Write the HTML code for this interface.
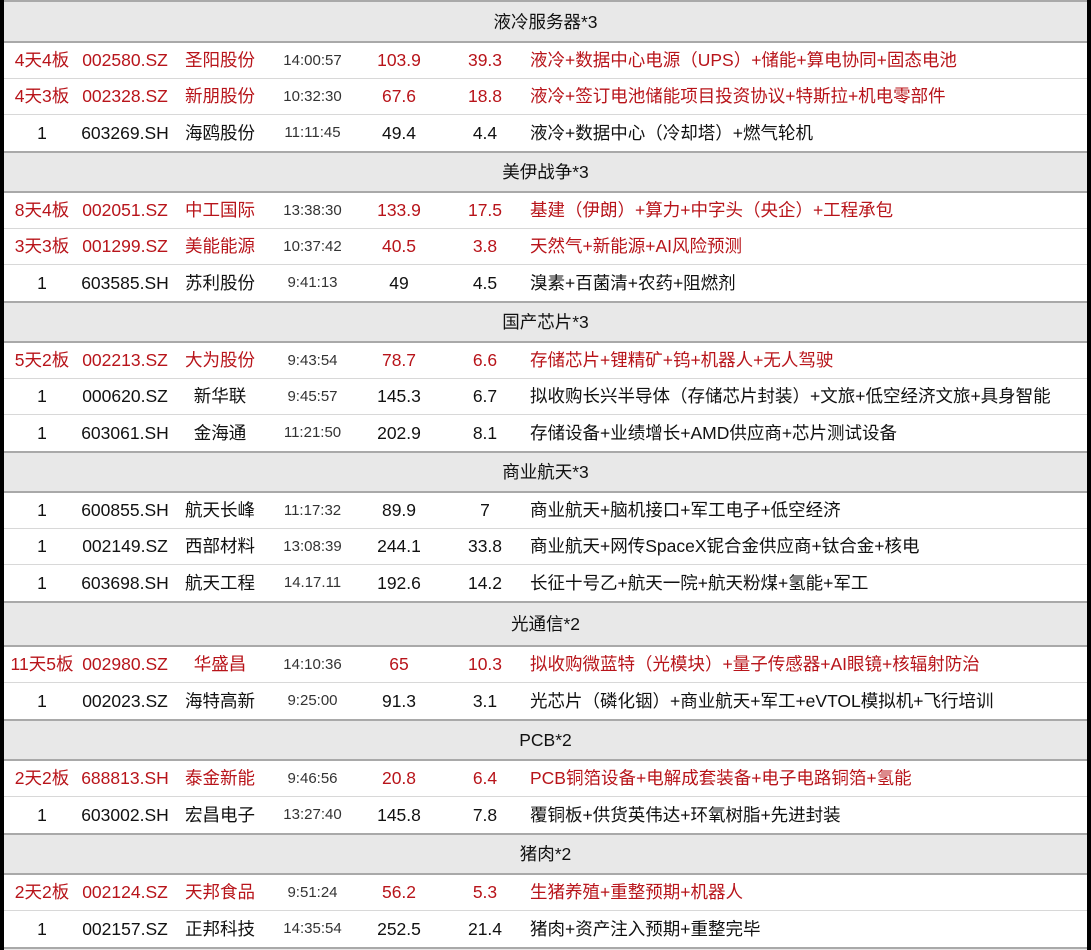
<!DOCTYPE html>
<html><head><meta charset="utf-8"><style>
body{margin:0;width:1091px;height:950px;background:#000;overflow:hidden;font-family:"Liberation Sans","Noto Sans CJK SC",sans-serif;}
.wrap{position:absolute;left:4px;top:0;width:1083px;height:950px;background:#e8e8e8;border-top:2px solid #a9a9a9;box-sizing:border-box;padding-top:1px;}
.h{height:38px;line-height:38px;text-align:center;font-size:17.5px;color:#111;background:#e8e8e8;border-bottom:2px solid #a9a9a9;}
.h.t{height:42px;line-height:42px;}
.r{height:35px;line-height:35px;background:#fff;border-bottom:1px solid #d8d8d8;position:relative;font-size:17.5px;color:#111;white-space:nowrap;}
.r.l{height:36px;line-height:36px;border-bottom:2px solid #a9a9a9;}
.r span{position:absolute;top:0;text-align:center;}
.c1{left:0;width:76px}.c2{left:76px;width:90px}.c3{left:166px;width:100px}
.c4{left:266px;width:85px;font-size:15px;color:#333}.c5{left:351px;width:88px}.c6{left:439px;width:84px}
.r span.c7{left:526px;text-align:left}
.red{color:#b8141a}.red .c4{color:#333}
</style></head><body><div class="wrap">
<div class="h">液冷服务器*3</div>
<div class="r red"><span class="c1">4天4板</span><span class="c2">002580.SZ</span><span class="c3">圣阳股份</span><span class="c4">14:00:57</span><span class="c5">103.9</span><span class="c6">39.3</span><span class="c7">液冷+数据中心电源（UPS）+储能+算电协同+固态电池</span></div>
<div class="r red"><span class="c1">4天3板</span><span class="c2">002328.SZ</span><span class="c3">新朋股份</span><span class="c4">10:32:30</span><span class="c5">67.6</span><span class="c6">18.8</span><span class="c7">液冷+签订电池储能项目投资协议+特斯拉+机电零部件</span></div>
<div class="r l"><span class="c1">1</span><span class="c2">603269.SH</span><span class="c3">海鸥股份</span><span class="c4">11:11:45</span><span class="c5">49.4</span><span class="c6">4.4</span><span class="c7">液冷+数据中心（冷却塔）+燃气轮机</span></div>
<div class="h">美伊战争*3</div>
<div class="r red"><span class="c1">8天4板</span><span class="c2">002051.SZ</span><span class="c3">中工国际</span><span class="c4">13:38:30</span><span class="c5">133.9</span><span class="c6">17.5</span><span class="c7">基建（伊朗）+算力+中字头（央企）+工程承包</span></div>
<div class="r red"><span class="c1">3天3板</span><span class="c2">001299.SZ</span><span class="c3">美能能源</span><span class="c4">10:37:42</span><span class="c5">40.5</span><span class="c6">3.8</span><span class="c7">天然气+新能源+AI风险预测</span></div>
<div class="r l"><span class="c1">1</span><span class="c2">603585.SH</span><span class="c3">苏利股份</span><span class="c4">9:41:13</span><span class="c5">49</span><span class="c6">4.5</span><span class="c7">溴素+百菌清+农药+阻燃剂</span></div>
<div class="h">国产芯片*3</div>
<div class="r red"><span class="c1">5天2板</span><span class="c2">002213.SZ</span><span class="c3">大为股份</span><span class="c4">9:43:54</span><span class="c5">78.7</span><span class="c6">6.6</span><span class="c7">存储芯片+锂精矿+钨+机器人+无人驾驶</span></div>
<div class="r"><span class="c1">1</span><span class="c2">000620.SZ</span><span class="c3">新华联</span><span class="c4">9:45:57</span><span class="c5">145.3</span><span class="c6">6.7</span><span class="c7">拟收购长兴半导体（存储芯片封装）+文旅+低空经济文旅+具身智能</span></div>
<div class="r l"><span class="c1">1</span><span class="c2">603061.SH</span><span class="c3">金海通</span><span class="c4">11:21:50</span><span class="c5">202.9</span><span class="c6">8.1</span><span class="c7">存储设备+业绩增长+AMD供应商+芯片测试设备</span></div>
<div class="h">商业航天*3</div>
<div class="r"><span class="c1">1</span><span class="c2">600855.SH</span><span class="c3">航天长峰</span><span class="c4">11:17:32</span><span class="c5">89.9</span><span class="c6">7</span><span class="c7">商业航天+脑机接口+军工电子+低空经济</span></div>
<div class="r"><span class="c1">1</span><span class="c2">002149.SZ</span><span class="c3">西部材料</span><span class="c4">13:08:39</span><span class="c5">244.1</span><span class="c6">33.8</span><span class="c7">商业航天+网传SpaceX铌合金供应商+钛合金+核电</span></div>
<div class="r l"><span class="c1">1</span><span class="c2">603698.SH</span><span class="c3">航天工程</span><span class="c4">14.17.11</span><span class="c5">192.6</span><span class="c6">14.2</span><span class="c7">长征十号乙+航天一院+航天粉煤+氢能+军工</span></div>
<div class="h t">光通信*2</div>
<div class="r red"><span class="c1">11天5板</span><span class="c2">002980.SZ</span><span class="c3">华盛昌</span><span class="c4">14:10:36</span><span class="c5">65</span><span class="c6">10.3</span><span class="c7">拟收购微蓝特（光模块）+量子传感器+AI眼镜+核辐射防治</span></div>
<div class="r l"><span class="c1">1</span><span class="c2">002023.SZ</span><span class="c3">海特高新</span><span class="c4">9:25:00</span><span class="c5">91.3</span><span class="c6">3.1</span><span class="c7">光芯片（磷化铟）+商业航天+军工+eVTOL模拟机+飞行培训</span></div>
<div class="h">PCB*2</div>
<div class="r red"><span class="c1">2天2板</span><span class="c2">688813.SH</span><span class="c3">泰金新能</span><span class="c4">9:46:56</span><span class="c5">20.8</span><span class="c6">6.4</span><span class="c7">PCB铜箔设备+电解成套装备+电子电路铜箔+氢能</span></div>
<div class="r l"><span class="c1">1</span><span class="c2">603002.SH</span><span class="c3">宏昌电子</span><span class="c4">13:27:40</span><span class="c5">145.8</span><span class="c6">7.8</span><span class="c7">覆铜板+供货英伟达+环氧树脂+先进封装</span></div>
<div class="h">猪肉*2</div>
<div class="r red"><span class="c1">2天2板</span><span class="c2">002124.SZ</span><span class="c3">天邦食品</span><span class="c4">9:51:24</span><span class="c5">56.2</span><span class="c6">5.3</span><span class="c7">生猪养殖+重整预期+机器人</span></div>
<div class="r l"><span class="c1">1</span><span class="c2">002157.SZ</span><span class="c3">正邦科技</span><span class="c4">14:35:54</span><span class="c5">252.5</span><span class="c6">21.4</span><span class="c7">猪肉+资产注入预期+重整完毕</span></div>
</div></body></html>
